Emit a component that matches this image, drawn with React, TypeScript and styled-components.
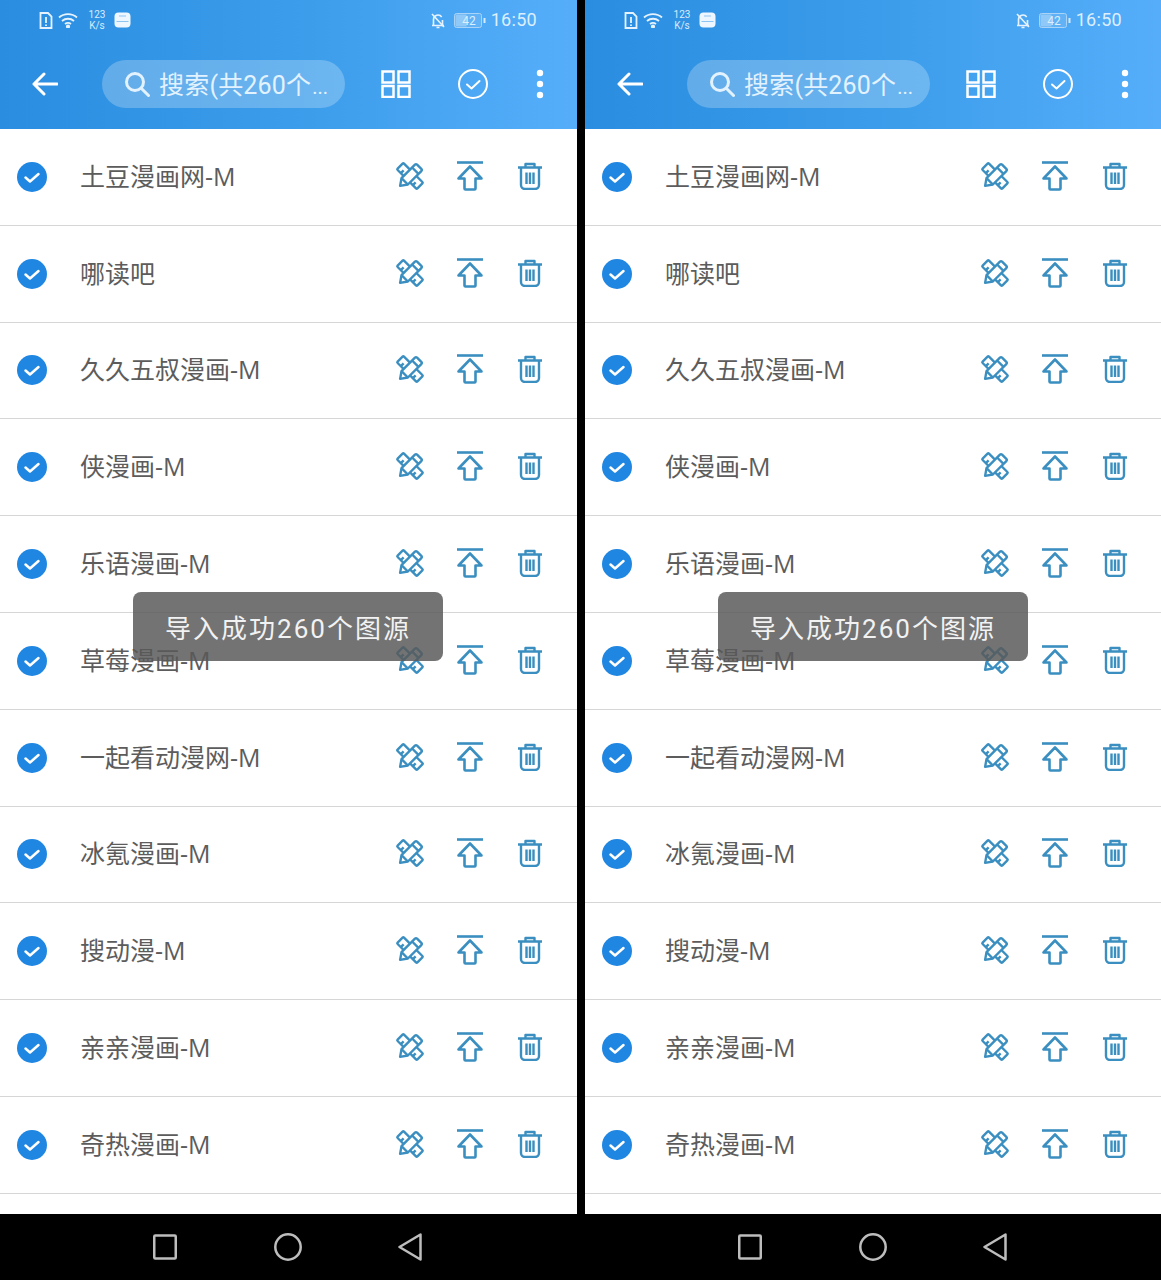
import React from "react";
import styled, { createGlobalStyle } from "styled-components";

const GlobalStyle = createGlobalStyle`
  html, body {
    margin: 0;
    padding: 0;
    background: #000;
  }
  * {
    box-sizing: border-box;
  }
`;

const Page = styled.div`
  display: grid;
  grid-template-columns: 577px 577px;
  column-gap: 8px;
  width: 1161px;
  height: 1280px;
  background: #000;
  overflow: hidden;
  font-family: Roboto, "Noto Sans CJK SC", sans-serif;
`;

const Phone = styled.div`
  position: relative;
  display: flex;
  flex-direction: column;
  height: 1280px;
  overflow: hidden;
`;

const Header = styled.header`
  flex: none;
  height: 129px;
  background: linear-gradient(90deg, #2b8de0 0%, #3a9cea 50%, #56aefa 100%);
  color: #fff;
`;

const StatusBar = styled.div`
  display: flex;
  align-items: center;
  justify-content: space-between;
  height: 40px;
  padding: 0 40px 0 39px;
`;

const StatusGroup = styled.div`
  display: flex;
  align-items: center;
  gap: 5px;
`;

const BellSlot = styled.span`
  display: flex;
  margin-right: 3px;
`;

const NetSpeed = styled.div`
  display: flex;
  flex-direction: column;
  align-items: center;
  width: 18px;
  margin: 0 3px 0 5px;
  font-size: 10px;
  line-height: 11px;
  color: #d8ecfd;
`;

const Clock = styled.span`
  font-size: 18px;
  line-height: 20px;
  letter-spacing: 0.3px;
  color: #dcefff;
`;

const Toolbar = styled.div`
  display: flex;
  align-items: center;
  height: 88px;
  padding: 0 30px 0 32px;

  svg {
    flex: none;
  }
`;

const Search = styled.div`
  display: flex;
  align-items: center;
  flex: none;
  width: 243px;
  height: 48px;
  margin-left: 44px;
  padding-left: 22px;
  gap: 9px;
  border-radius: 24px;
  background: rgba(255, 255, 255, 0.24);
  color: #e3f2ff;
  font-size: 25px;
  letter-spacing: 0.2px;
  white-space: nowrap;
`;

const SearchText = styled.span`
  padding-bottom: 3px;
`;

const Ellipsis = styled.span`
  font-size: 20px;
  letter-spacing: 0;
  margin-left: 1px;
`;

const ToolActions = styled.div`
  display: flex;
  align-items: center;
  gap: 47px;
  margin-left: 36px;
`;

const List = styled.ul`
  flex: 1;
  margin: 0;
  padding: 0;
  list-style: none;
  background: #fff;
  overflow: hidden;
`;

const Row = styled.li`
  display: flex;
  align-items: center;
  height: 96.8px;
  padding: 0 17px;
  border-bottom: 1px solid #d6d6d6;
`;

const Title = styled.span`
  flex: 1;
  margin-left: 33px;
  padding-bottom: 2px;
  font-family: "Open Sans", "Noto Sans CJK SC", sans-serif;
  font-size: 25px;
  line-height: 34px;
  color: #5c5c5c;
  white-space: nowrap;
`;

const Action = styled.span`
  display: flex;
  align-items: center;
  justify-content: center;
  width: 60px;
  padding-bottom: 2px;
  color: #3b8fc0;
`;

const Toast = styled.div`
  position: absolute;
  left: 133px;
  top: 592px;
  width: 310px;
  height: 69px;
  display: flex;
  align-items: center;
  justify-content: center;
  border-radius: 8px;
  background: rgba(88, 88, 88, 0.84);
  color: #f2f2f2;
  font-size: 26px;
  letter-spacing: 2px;
`;

const NavBar = styled.nav`
  flex: none;
  display: flex;
  align-items: center;
  justify-content: center;
  gap: 96.5px;
  height: 66px;
  padding-right: 2px;
  background: #000;
  color: #bdbdbd;
`;

const SimIcon = () => (
  <svg width="14" height="17" viewBox="0 0 14 17" fill="none" stroke="#e6f3ff" strokeWidth="1.800">
    <path d="M1.500 1h7.500l3.500 3.500V16H1.500z" />
    <path d="M7 5v6M7 12.500v1.500" />
  </svg>
);

const WifiIcon = () => (
  <svg width="20" height="16" viewBox="0 0 20 16" fill="none" stroke="#e6f3ff" strokeWidth="1.800">
    <path d="M1 5.500c5-4.500 13-4.500 18 0" />
    <path d="M4 9c3.500-3 8.500-3 12 0" />
    <path d="M7 12c1.800-1.400 4.200-1.400 6 0" />
    <circle cx="10" cy="14.500" r="1.200" fill="#e6f3ff" />
  </svg>
);

const MessageIcon = () => (
  <svg width="17" height="16" viewBox="0 0 17 16">
    <rect x="0.500" y="0.500" width="16" height="15" rx="4" fill="#eef7ff" />
    <path d="M5 4h7M2.500 9.500h12" stroke="#8cc4f2" strokeWidth="1.200" />
  </svg>
);

const BellOffIcon = () => (
  <svg width="16" height="17" viewBox="0 0 16 17" fill="none" stroke="#e6f3ff" strokeWidth="1.600">
    <path d="M3.500 13V7.500a4.500 4.500 0 0 1 8.200-2.500M12.500 8v5M2 13.500h12M6.500 15.500h3" />
    <path d="M2 2l12 13" />
  </svg>
);

const Battery = () => (
  <svg width="32" height="15" viewBox="0 0 32 15">
    <rect x="0.500" y="0.500" width="27" height="14" rx="2" fill="rgba(255,255,255,0.12)" stroke="#a9d3f7" />
    <rect x="1.500" y="1.500" width="11" height="12" fill="rgba(255,255,255,0.3)" />
    <text x="15" y="12" fontSize="12" fill="#dcefff" fontFamily="Roboto" textAnchor="middle">42</text>
    <rect x="29.500" y="5" width="2" height="5" fill="#d5eafc" />
  </svg>
);

const BackIcon = () => (
  <svg width="26" height="24" viewBox="0 0 26 24" fill="none" stroke="#fff" strokeWidth="3" strokeLinecap="round" strokeLinejoin="round">
    <path d="M25 12H2M12 2 2 12l10 10" />
  </svg>
);

const SearchIcon = () => (
  <svg width="26" height="26" viewBox="0 0 26 26" fill="none" stroke="#e3f2ff" strokeWidth="3" strokeLinecap="round">
    <circle cx="11" cy="11" r="8.500" />
    <path d="m17.500 17.500 7 7" />
  </svg>
);

const GridIcon = () => (
  <svg width="30" height="28" viewBox="0 0 30 28" fill="none" stroke="#fff" strokeWidth="2.500">
    <rect x="1.500" y="1.500" width="11" height="11" />
    <rect x="17.500" y="1.500" width="11" height="11" />
    <rect x="1.500" y="16" width="11" height="11" />
    <rect x="17.500" y="16" width="11" height="11" />
  </svg>
);

const CircleCheckIcon = () => (
  <svg width="30" height="30" viewBox="0 0 30 30" fill="none" stroke="#fff" strokeWidth="2" strokeLinecap="round" strokeLinejoin="round">
    <circle cx="15" cy="15" r="14" />
    <path d="m9 15.500 4.500 4 8-7.500" />
  </svg>
);

const DotsIcon = () => (
  <svg width="10" height="30" viewBox="0 0 10 30" fill="#fff">
    <circle cx="5" cy="4" r="3.200" />
    <circle cx="5" cy="15" r="3.200" />
    <circle cx="5" cy="26" r="3.200" />
  </svg>
);

const CheckedIcon = () => (
  <svg width="30" height="30" viewBox="0 0 30 30">
    <circle cx="15" cy="15" r="15" fill="#1f86e2" />
    <path d="m8.500 15.500 4.500 4 8.500-7.500" fill="none" stroke="#fff" strokeWidth="2.500" strokeLinecap="round" strokeLinejoin="round" />
  </svg>
);

const EditIcon = () => (
  <svg width="30" height="30" viewBox="0 0 30 30" fill="none" stroke="currentColor" strokeWidth="2.400" strokeLinejoin="round">
    <g transform="rotate(-45 15 15)">
      <rect x="10.500" y="1" width="9" height="28" rx="1" />
      <path d="M10.500 6.500h4M10.500 11h4M10.500 19h4M10.500 23.500h4" />
    </g>
    <g transform="rotate(45 15 15)">
      <path d="M10.500 3.500a1.500 1.500 0 0 1 1.500-1.500h6a1.500 1.500 0 0 1 1.500 1.500V22.500L15 29l-4.500-6.500z" fill="#fff" />
      <path d="M10.500 7.500h9M10.500 22.500h9" />
    </g>
  </svg>
);

const UploadIcon = () => (
  <svg width="28" height="30" viewBox="0 0 28 30" fill="none" stroke="currentColor" strokeWidth="2.600" strokeLinejoin="round">
    <path d="M1 1.500h26" />
    <path d="M14 5.500 2.500 17.500H8.500v10a1 1 0 0 0 1 1h9a1 1 0 0 0 1-1v-10h6z" />
  </svg>
);

const TrashIcon = () => (
  <svg width="26" height="28" viewBox="0 0 26 28" fill="none" stroke="currentColor" strokeWidth="2.400" strokeLinejoin="round">
    <path d="M1 5.500h24M8.500 5.500V2h9v3.500" />
    <path d="M4 5.500V23a4 4 0 0 0 4 4h10a4 4 0 0 0 4-4V5.500" />
    <path d="M9.500 10.500v11.500M13 10.500v11.500M16.500 10.500v11.500" />
  </svg>
);

const NavSquare = () => (
  <svg width="24" height="26" viewBox="0 0 24 26" fill="none" stroke="currentColor" strokeWidth="2.500" strokeLinejoin="round">
    <rect x="1.250" y="1.500" width="21.500" height="23" rx="1" />
  </svg>
);

const NavCircle = () => (
  <svg width="28" height="28" viewBox="0 0 28 28" fill="none" stroke="currentColor" strokeWidth="2.500">
    <circle cx="14" cy="14" r="12.700" />
  </svg>
);

const NavBack = () => (
  <svg width="24" height="28" viewBox="0 0 24 28" fill="none" stroke="currentColor" strokeWidth="2.500" strokeLinejoin="round">
    <path d="M22.500 1.500v25L1.500 14z" />
  </svg>
);

const sources = [
  "土豆漫画网-M",
  "哪读吧",
  "久久五叔漫画-M",
  "侠漫画-M",
  "乐语漫画-M",
  "草莓漫画-M",
  "一起看动漫网-M",
  "冰氪漫画-M",
  "搜动漫-M",
  "亲亲漫画-M",
  "奇热漫画-M",
];

const Screen = () => (
  <Phone>
    <Header>
      <StatusBar>
        <StatusGroup>
          <SimIcon />
          <WifiIcon />
          <NetSpeed>
            <span>123</span>
            <span>K/s</span>
          </NetSpeed>
          <MessageIcon />
        </StatusGroup>
        <StatusGroup>
          <BellSlot>
            <BellOffIcon />
          </BellSlot>
          <Battery />
          <Clock>16:50</Clock>
        </StatusGroup>
      </StatusBar>
      <Toolbar>
        <BackIcon />
        <Search>
          <SearchIcon />
          <SearchText>
            搜索(共260个<Ellipsis>...</Ellipsis>
          </SearchText>
        </Search>
        <ToolActions>
          <GridIcon />
          <CircleCheckIcon />
          <DotsIcon />
        </ToolActions>
      </Toolbar>
    </Header>
    <List>
      {sources.map((name) => (
        <Row key={name}>
          <CheckedIcon />
          <Title>{name}</Title>
          <Action>
            <EditIcon />
          </Action>
          <Action>
            <UploadIcon />
          </Action>
          <Action>
            <TrashIcon />
          </Action>
        </Row>
      ))}
    </List>
    <NavBar>
      <NavSquare />
      <NavCircle />
      <NavBack />
    </NavBar>
    <Toast>导入成功260个图源</Toast>
  </Phone>
);

export default function App() {
  return (
    <Page>
      <GlobalStyle />
      <Screen />
      <Screen />
    </Page>
  );
}
